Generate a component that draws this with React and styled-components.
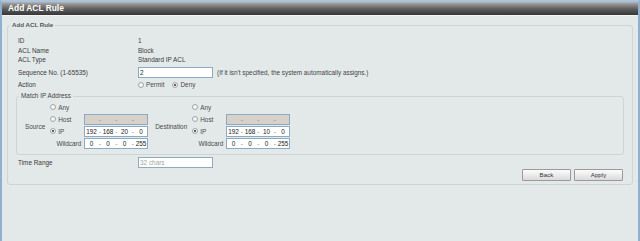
import React from "react";
import styled, { createGlobalStyle } from "styled-components";

const GlobalStyle = createGlobalStyle`
  html, body {
    margin: 0;
    padding: 0;
    background: #e3e9e9;
    overflow: hidden;
  }
  body {
    font-family: "Liberation Sans", Arial, sans-serif;
  }
`;

// Outer window frame with the blue edge
const Page = styled.div`
  box-sizing: border-box;
  width: 640px;
  height: 241px;
  background: #e3e9e9;
  border-top: 2px solid #a9c4dc;
  border-left: 2px solid #8fb0cf;
  border-right: 2px solid #8fb0cf;
  color: #3a3a3a;
  font-size: 6.4px;
`;

const TitleBar = styled.div`
  height: 13px;
  line-height: 13px;
  padding-left: 6px;
  background: linear-gradient(to bottom, #b4b4b4 0%, #8a8a8a 22%, #5c5c5c 55%, #363636 100%);
  border-bottom: 1px solid #f4f6f6;
  color: #fff;
  font-weight: bold;
  font-size: 8.4px;
`;

const Content = styled.div`
  padding: 0 5px;
`;

const Fieldset = styled.fieldset`
  margin: ${({ $top }) => $top || 0}px 0 0 0;
  padding: 0;
  border: 1px solid #cdd6d5;
  border-radius: 3px;
  min-width: 0;
`;

const Legend = styled.legend`
  margin-left: ${({ $indent }) => $indent || 0}px;
  padding: 0 2px;
  height: 8px;
  line-height: 8px;
  font-weight: ${({ $bold }) => ($bold ? "bold" : "normal")};
  font-size: ${({ $bold }) => ($bold ? "6.2px" : "6.4px")};
  color: ${({ $bold }) => ($bold ? "#555" : "#444")};
`;

const Body = styled.div`
  padding: ${({ $pad }) => $pad || "0"};
`;

const Row = styled.div`
  display: grid;
  grid-template-columns: 120px 1fr;
  align-items: center;
  height: ${({ $h }) => $h || 9.5}px;
  margin-top: ${({ $top }) => $top || 0}px;
  padding-left: 2px;
`;

const Value = styled.div`
  display: flex;
  align-items: center;
  gap: ${({ $gap }) => $gap || 4}px;
`;

const TextInput = styled.input`
  box-sizing: border-box;
  width: 75px;
  height: 11px;
  margin: 0;
  padding: 0 1px;
  border: 1px solid #8ea9c2;
  background: #fff;
  font-family: inherit;
  font-size: 6.4px;
  color: #222;
  outline: none;
  &::placeholder {
    color: #a5a5a5;
  }
`;

const Hint = styled.span`
  color: #444;
`;

const RadioLabel = styled.label`
  display: inline-flex;
  align-items: center;
  gap: 2px;
  color: #4a4a4a;
`;

const RadioDot = styled.span`
  box-sizing: border-box;
  width: 6px;
  height: 6px;
  border-radius: 50%;
  border: 1px solid #a4a8aa;
  background: radial-gradient(circle, #ffffff 0%, #e4e6e6 100%);
  display: inline-flex;
  align-items: center;
  justify-content: center;
  &::after {
    content: "";
    width: 2px;
    height: 2px;
    border-radius: 50%;
    background: ${({ $checked }) => ($checked ? "#333" : "transparent")};
  }
`;

const Radio = ({ checked, children }) => (
  <RadioLabel>
    <RadioDot $checked={checked} />
    {children}
  </RadioLabel>
);

const MatchBody = styled.div`
  display: flex;
  gap: 7px;
  padding: 1px 0 5px 8px;
`;

const Group = styled.div`
  display: flex;
  align-items: center;
  gap: 5px;
`;

const GroupLabel = styled.div`
  color: #4a4a4a;
  padding-top: 2px;
`;

const AddrGrid = styled.div`
  display: grid;
  grid-template-columns: 34px 64px;
  grid-auto-rows: 12px;
  align-items: center;
`;

const WildLabel = styled.div`
  text-align: right;
  padding-right: 3px;
  color: #4a4a4a;
`;

const IpBox = styled.div`
  box-sizing: border-box;
  width: 64px;
  height: 11px;
  display: grid;
  grid-template-columns: 1fr 4px 1fr 4px 1fr 4px 1fr;
  align-items: center;
  border: 1px solid #8ea9c2;
  background: ${({ $disabled }) => ($disabled ? "#d6d2ca" : "#fff")};
  color: #222;
  text-align: center;
`;

const Dot = styled.span`
  color: ${({ $disabled }) => ($disabled ? "#8d8a84" : "#888")};
`;

const IpField = ({ value = ["", "", "", ""], disabled }) => (
  <IpBox $disabled={disabled}>
    <span>{value[0]}</span>
    <Dot $disabled={disabled}>-</Dot>
    <span>{value[1]}</span>
    <Dot $disabled={disabled}>-</Dot>
    <span>{value[2]}</span>
    <Dot $disabled={disabled}>-</Dot>
    <span>{value[3]}</span>
  </IpBox>
);

const Address = ({ label, ip, wildcard }) => (
  <Group>
    <GroupLabel>{label}</GroupLabel>
    <AddrGrid>
      <Radio>Any</Radio>
      <span />
      <Radio>Host</Radio>
      <IpField disabled />
      <Radio checked>IP</Radio>
      <IpField value={ip} />
      <WildLabel>Wildcard</WildLabel>
      <IpField value={wildcard} />
    </AddrGrid>
  </Group>
);

const Buttons = styled.div`
  display: flex;
  justify-content: flex-end;
  gap: 3px;
  height: 12px;
  padding: 0 1px 3px 0;
`;

const Button = styled.button`
  box-sizing: border-box;
  width: 49px;
  height: 12px;
  margin: 0;
  padding: 0;
  border: 1px solid #9a9a9a;
  border-radius: 1px;
  background: linear-gradient(to bottom, #fbfbfb 0%, #ececec 50%, #dadada 100%);
  font-family: inherit;
  font-size: 6.2px;
  color: #333;
`;

export default function App() {
  return (
    <>
      <GlobalStyle />
      <Page>
        <TitleBar>Add ACL Rule</TitleBar>
        <Content>
          <Fieldset $top={5}>
            <Legend $bold $indent={2}>Add ACL Rule</Legend>
            <Body $pad="7px 8px 0 8px">
              <Row>
                <span>ID</span>
                <span>1</span>
              </Row>
              <Row>
                <span>ACL Name</span>
                <span>Block</span>
              </Row>
              <Row>
                <span>ACL Type</span>
                <span>Standard IP ACL</span>
              </Row>
              <Row $h={15.5}>
                <span>Sequence No. (1-65535)</span>
                <Value>
                  <TextInput defaultValue="2" />
                  <Hint>(If it isn't specified, the system automatically assigns.)</Hint>
                </Value>
              </Row>
              <Row>
                <span>Action</span>
                <Value $gap={8}>
                  <Radio>Permit</Radio>
                  <Radio checked>Deny</Radio>
                </Value>
              </Row>
              <Fieldset $top={2.5}>
                <Legend $indent={2}>Match IP Address</Legend>
                <MatchBody>
                  <Address label="Source" ip={["192", "168", "20", "0"]} wildcard={["0", "0", "0", "255"]} />
                  <Address label="Destination" ip={["192", "168", "10", "0"]} wildcard={["0", "0", "0", "255"]} />
                </MatchBody>
              </Fieldset>
              <Row $h={12} $top={1.5}>
                <span>Time Range</span>
                <Value>
                  <TextInput placeholder="32 chars" />
                </Value>
              </Row>
              <Buttons>
                <Button>Back</Button>
                <Button>Apply</Button>
              </Buttons>
            </Body>
          </Fieldset>
        </Content>
      </Page>
    </>
  );
}
